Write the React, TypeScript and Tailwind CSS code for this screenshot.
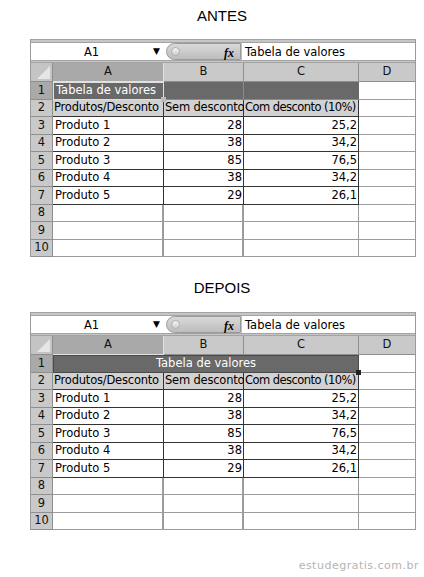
import React from "react";

const font = { fontFamily: '"DejaVu Sans", Verdana, sans-serif' };

type Row = { label: string; b: string; c: string };

const data: Row[] = [
  { label: "Produto 1", b: "28", c: "25,2" },
  { label: "Produto 2", b: "38", c: "34,2" },
  { label: "Produto 3", b: "85", c: "76,5" },
  { label: "Produto 4", b: "38", c: "34,2" },
  { label: "Produto 5", b: "29", c: "26,1" },
];

// alternating heights so rows 1..10 cover 175px
const heights = ["h-[18px]", "h-[17px]", "h-[18px]", "h-[17px]", "h-[18px]", "h-[17px]", "h-[18px]", "h-[17px]", "h-[18px]", "h-[17px]"];

function RowHead({ n, h, active }: { n: number; h: string; active?: boolean }) {
  return (
    <div
      className={`w-[22px] ${h} shrink-0 flex items-center justify-center border-b border-r border-[#8f8f8f] text-[11.5px] text-[#111] ${
        active ? "bg-[#a9a9a9]" : "bg-[#c9c9c9]"
      }`}
    >
      {n}
    </div>
  );
}

function Sheet({ merged }: { merged: boolean }) {
  return (
    <div className="ml-[30px] w-[386px] border-l border-r border-[#9a9a9a]" style={font}>
      <div className="h-[4px] bg-[#c6c6c6] border-y border-[#a3a3a3]" />
      <div className="flex h-[17px] bg-white text-[11.5px] text-black">
        <div className="relative w-[135px] shrink-0">
          <span className="absolute left-[53px] top-[1px]">A1</span>
          <span className="absolute left-[122px] top-[2px] text-[9px]">▼</span>
        </div>
        <div className="relative w-[75px] shrink-0 rounded-l-full border border-[#9a9a9a] bg-gradient-to-b from-[#d9d9d9] to-[#bdbdbd]">
          <div className="absolute left-[4px] top-[3px] h-[9px] w-[9px] rounded-full bg-gradient-to-b from-[#f4f4f4] to-[#d0d0d0] border border-[#b0b0b0]" />
          <span className="absolute right-[6px] top-[0px] italic font-bold text-[12px]" style={{ fontFamily: '"Liberation Serif", serif' }}>
            fx
          </span>
        </div>
        <div className="flex-1 pl-[3px] pt-[1px] border-l border-[#c0c0c0]">Tabela de valores</div>
      </div>
      <div className="h-[3px] bg-[#c6c6c6] border-y border-[#a3a3a3]" />

      {/* column headers */}
      <div className="flex h-[19px] text-[11.5px] text-[#111]">
        <div className="relative w-[22px] shrink-0 bg-[#c4c4c4] border-r border-b border-[#8f8f8f] overflow-hidden">
          <div className="absolute right-[2px] bottom-[2px] w-0 h-0 border-l-[13px] border-l-transparent border-b-[13px] border-b-[#e6e6e6]" />
        </div>
        <div className="w-[111px] shrink-0 flex items-center justify-center bg-[#a9a9a9] border-r border-b border-[#e2e2e2]">A</div>
        <div className="w-[80px] shrink-0 flex items-center justify-center bg-[#c9c9c9] border-r border-b border-[#8f8f8f]">B</div>
        <div className="w-[115px] shrink-0 flex items-center justify-center bg-[#c9c9c9] border-r border-b border-[#8f8f8f]">C</div>
        <div className="flex-1 flex items-center justify-center bg-[#c9c9c9] border-b border-[#8f8f8f]">D</div>
      </div>

      {/* row 1 */}
      <div className="flex text-[11.5px]">
        <RowHead n={1} h={heights[0]} active />
        {merged ? (
          <div className="relative w-[306px] h-[18px] shrink-0 bg-[#696969] text-white flex items-center justify-center border border-[#4a4a4a]">
            Tabela de valores
            <div className="absolute -right-[3px] -bottom-[3px] w-[5px] h-[5px] bg-[#222]" />
          </div>
        ) : (
          <>
            <div className="relative w-[111px] h-[18px] shrink-0 bg-[#696969] text-white flex items-center pl-[2px] border border-[#e0e0e0]">
              Tabela de valores
              <div className="absolute -right-[3px] -bottom-[3px] w-[5px] h-[5px] bg-[#bbb]" />
            </div>
            <div className="w-[80px] h-[18px] shrink-0 bg-[#696969] border-r border-b border-[#8a8a8a]" />
            <div className="w-[115px] h-[18px] shrink-0 bg-[#696969] border-b border-[#8a8a8a]" />
          </>
        )}
        <div className="flex-1 h-[18px] bg-white border-b border-[#a0a0a0]" />
      </div>

      {/* row 2 */}
      <div className="flex text-[11.5px] text-black">
        <RowHead n={2} h={heights[1]} />
        <div className="w-[111px] h-[17px] shrink-0 bg-[#d2d2d2] flex items-center pl-[1px] border-r border-b border-[#333] whitespace-nowrap tracking-[-0.2px]">
          Produtos/Desconto
        </div>
        <div className="w-[80px] h-[17px] shrink-0 bg-[#d2d2d2] flex items-center pl-[1px] border-r border-b border-[#333] whitespace-nowrap tracking-[-0.2px]">
          Sem desconto
        </div>
        <div className="w-[115px] h-[17px] shrink-0 bg-[#d2d2d2] flex items-center pl-[1px] border-r border-b border-[#333] whitespace-nowrap tracking-[-0.55px]">
          Com desconto (10%)
        </div>
        <div className="flex-1 h-[17px] bg-white border-b border-[#a0a0a0]" />
      </div>

      {data.map((r, i) => (
        <div key={r.label} className="flex text-[11.5px] text-black">
          <RowHead n={i + 3} h={heights[i + 2]} />
          <div className={`w-[111px] ${heights[i + 2]} shrink-0 bg-white flex items-center pl-[2px] border-r border-b border-[#333]`}>{r.label}</div>
          <div className={`w-[80px] ${heights[i + 2]} shrink-0 bg-white flex items-center justify-end pr-[1px] border-r border-b border-[#333]`}>{r.b}</div>
          <div className={`w-[115px] ${heights[i + 2]} shrink-0 bg-white flex items-center justify-end pr-[1px] border-r border-b border-[#333]`}>{r.c}</div>
          <div className={`flex-1 ${heights[i + 2]} bg-white border-b border-[#a0a0a0]`} />
        </div>
      ))}

      {[8, 9, 10].map((n, i) => (
        <div key={n} className="flex text-[11.5px]">
          <RowHead n={n} h={heights[i + 7]} />
          <div className={`w-[111px] ${heights[i + 7]} shrink-0 bg-white border-r-2 border-b border-[#9c9c9c]`} />
          <div className={`w-[80px] ${heights[i + 7]} shrink-0 bg-white border-r-2 border-b border-[#9c9c9c]`} />
          <div className={`w-[115px] ${heights[i + 7]} shrink-0 bg-white border-r border-b border-[#9c9c9c]`} />
          <div className={`flex-1 ${heights[i + 7]} bg-white border-b border-[#9c9c9c]`} />
        </div>
      ))}
    </div>
  );
}

export default function App() {
  return (
    <div className="w-[424px] h-[577px] bg-white relative overflow-hidden">
      <h1
        className="pt-[7px] h-[39px] text-center pl-[20px] text-[15px] leading-[18px] text-black"
        style={{ fontFamily: '"Liberation Sans", Arial, sans-serif' }}
      >
        ANTES
      </h1>
      <Sheet merged={false} />
      <h1
        className="pt-[22px] h-[55px] text-center pl-[20px] text-[15px] leading-[18px] text-black"
        style={{ fontFamily: '"Liberation Sans", Arial, sans-serif' }}
      >
        DEPOIS
      </h1>
      <Sheet merged />
      <p className="absolute right-[5px] bottom-[3px] text-[11px] tracking-[0.5px] text-[#b4b4b4]" style={font}>
        estudegratis.com.br
      </p>
    </div>
  );
}
